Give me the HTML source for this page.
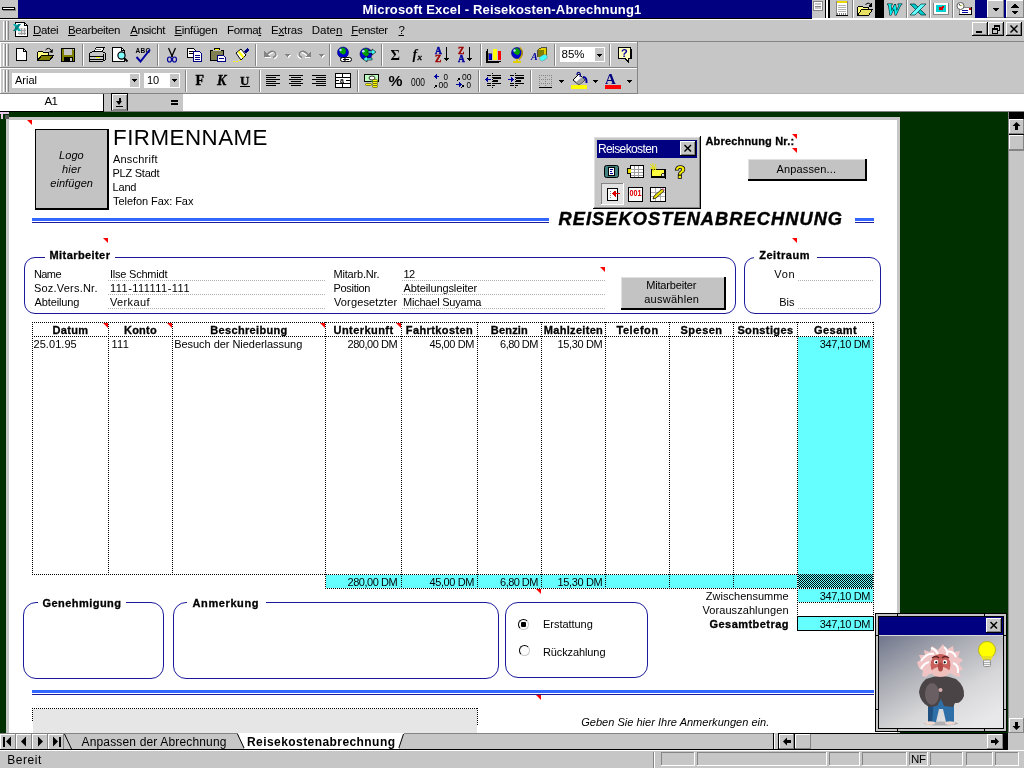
<!DOCTYPE html>
<html lang="de"><head><meta charset="utf-8"><title>Microsoft Excel - Reisekosten-Abrechnung1</title>
<style>
*{box-sizing:border-box;margin:0;padding:0}
html,body{width:1024px;height:768px;overflow:hidden;background:#003000;font-family:"Liberation Sans",sans-serif;font-size:10.5px;color:#000}
.a{position:absolute}
.t{position:absolute;white-space:nowrap;line-height:1}
.b{font-weight:bold}
.i{font-style:italic}
.g{background:#c6c6c6}
u{text-decoration:underline}
/* raised button */
.btn{position:absolute;background:#c6c6c6;border:1px solid;border-color:#fff #000 #000 #fff;box-shadow:inset -1px -1px 0 #848484}
.sunk{position:absolute;border:1px solid;border-color:#848484 #fff #fff #848484}
.sep{position:absolute;width:2px;border-left:1px solid #848484;border-right:1px solid #fff}
.rt{position:absolute;width:0;height:0;border-top:5px solid #f00;border-left:5px solid transparent}
.dot-h{position:absolute;height:1px;background-image:linear-gradient(90deg,#000 50%,transparent 50%);background-size:2px 1px}
.dot-v{position:absolute;width:1px;background-image:linear-gradient(180deg,#000 50%,transparent 50%);background-size:1px 2px}
.ldot{position:absolute;height:1px;background-image:linear-gradient(90deg,#b0b0b0 50%,transparent 50%);background-size:2px 1px}
.grp{position:absolute;border:1px solid #1a1a9a;border-radius:11px}
.lbl{position:absolute;background:#fff;font-weight:bold;white-space:nowrap;line-height:1;letter-spacing:.45px}
.cy{background:#66ffff}
</style></head><body>
<div id="root" style="position:absolute;left:0;top:0;width:1024px;height:768px;will-change:transform">
<!-- SECTION: titlebar -->
<div class="a" id="title" style="left:0;top:0;width:1024px;height:18px;background:#000080"></div>
<div class="a g" style="left:0;top:0;width:18px;height:18px"></div>
<div class="a" style="left:2px;top:7px;width:13px;height:3px;background:#fff;border:1px solid #000;box-shadow:1px 1px 0 #848484"></div>
<div class="a" style="left:0;top:18px;width:1024px;height:1px;background:#000"></div>
<!-- SECTION: menubar -->
<div class="a g" style="left:0;top:19px;width:1024px;height:75px"></div>
<!-- SECTION: toolbars -->
<div id="tb">
<svg class="a" style="left:0;top:0" width="1024" height="94" viewBox="0 0 1024 94" shape-rendering="crispEdges">
<rect x="0" y="19" width="1024" height="1" fill="#fff"/>
<rect x="0" y="41" width="1024" height="1" fill="#848484"/>
<rect x="0" y="42" width="638" height="1" fill="#fff"/>
<rect x="0" y="67" width="638" height="1" fill="#848484"/>
<rect x="637" y="42" width="1" height="26" fill="#848484"/>
<rect x="0" y="68" width="638" height="1" fill="#fff"/>
<rect x="0" y="93" width="638" height="1" fill="#848484"/>
<rect x="637" y="68" width="1" height="26" fill="#848484"/>
<rect x="638" y="93" width="386" height="1" fill="#b4b4b4"/>
<rect x="0" y="42" width="1" height="25" fill="#fff"/>
<rect x="0" y="68" width="1" height="25" fill="#fff"/>
<rect x="3" y="21" width="1" height="19" fill="#fff"/>
<rect x="4" y="21" width="1" height="19" fill="#c6c6c6"/>
<rect x="5" y="21" width="1" height="19" fill="#848484"/>
<rect x="6" y="21" width="1" height="19" fill="#fff"/>
<rect x="7" y="21" width="1" height="19" fill="#c6c6c6"/>
<rect x="8" y="21" width="1" height="19" fill="#848484"/>
<rect x="3" y="44" width="1" height="22" fill="#fff"/>
<rect x="4" y="44" width="1" height="22" fill="#c6c6c6"/>
<rect x="5" y="44" width="1" height="22" fill="#848484"/>
<rect x="6" y="44" width="1" height="22" fill="#fff"/>
<rect x="7" y="44" width="1" height="22" fill="#c6c6c6"/>
<rect x="8" y="44" width="1" height="22" fill="#848484"/>
<rect x="3" y="70" width="1" height="22" fill="#fff"/>
<rect x="4" y="70" width="1" height="22" fill="#c6c6c6"/>
<rect x="5" y="70" width="1" height="22" fill="#848484"/>
<rect x="6" y="70" width="1" height="22" fill="#fff"/>
<rect x="7" y="70" width="1" height="22" fill="#c6c6c6"/>
<rect x="8" y="70" width="1" height="22" fill="#848484"/>
<rect x="82" y="44" width="1" height="22" fill="#848484"/>
<rect x="83" y="44" width="1" height="22" fill="#fff"/>
<rect x="157" y="44" width="1" height="22" fill="#848484"/>
<rect x="158" y="44" width="1" height="22" fill="#fff"/>
<rect x="255" y="44" width="1" height="22" fill="#848484"/>
<rect x="256" y="44" width="1" height="22" fill="#fff"/>
<rect x="329" y="44" width="1" height="22" fill="#848484"/>
<rect x="330" y="44" width="1" height="22" fill="#fff"/>
<rect x="381" y="44" width="1" height="22" fill="#848484"/>
<rect x="382" y="44" width="1" height="22" fill="#fff"/>
<rect x="480" y="44" width="1" height="22" fill="#848484"/>
<rect x="481" y="44" width="1" height="22" fill="#fff"/>
<rect x="554" y="44" width="1" height="22" fill="#848484"/>
<rect x="555" y="44" width="1" height="22" fill="#fff"/>
<rect x="609" y="44" width="1" height="22" fill="#848484"/>
<rect x="610" y="44" width="1" height="22" fill="#fff"/>
<rect x="185" y="70" width="1" height="22" fill="#848484"/>
<rect x="186" y="70" width="1" height="22" fill="#fff"/>
<rect x="259" y="70" width="1" height="22" fill="#848484"/>
<rect x="260" y="70" width="1" height="22" fill="#fff"/>
<rect x="357" y="70" width="1" height="22" fill="#848484"/>
<rect x="358" y="70" width="1" height="22" fill="#fff"/>
<rect x="478" y="70" width="1" height="22" fill="#848484"/>
<rect x="479" y="70" width="1" height="22" fill="#fff"/>
<rect x="530" y="70" width="1" height="22" fill="#848484"/>
<rect x="531" y="70" width="1" height="22" fill="#fff"/>
<polygon points="15.5,22.5 24.5,22.5 27.5,25.5 27.5,36.5 15.5,36.5" fill="#fff" stroke="#000" stroke-width="1"/>
<polyline points="24.5,22.5 24.5,25.5 27.5,25.5" fill="none" stroke="#000" stroke-width="1"/>
<rect x="18" y="28" width="8" height="7" fill="#e0e0e0"/>
<rect x="21" y="28" width="1" height="7" fill="#a0a0a0"/>
<rect x="24" y="28" width="1" height="7" fill="#a0a0a0"/>
<rect x="18" y="30" width="8" height="1" fill="#a0a0a0"/>
<rect x="18" y="33" width="8" height="1" fill="#a0a0a0"/>
<polygon points="13,24 16,24 21,31 18,31" fill="#00b0b0" shape-rendering="auto"/>
<polygon points="18,24 21,24 16,31 13,31" fill="#008080" shape-rendering="auto"/>
<polygon points="16.5,48.5 23.5,48.5 26.5,51.5 26.5,60.5 16.5,60.5" fill="#fff" stroke="#000" stroke-width="1"/>
<polyline points="23.5,48.5 23.5,51.5 26.5,51.5" fill="none" stroke="#000" stroke-width="1"/>
<polygon points="37.5,60.5 37.5,52.5 38.5,51.5 42.5,51.5 43.5,52.5 48.5,52.5 48.5,56" fill="#ffff80" stroke="#000" stroke-width="1"/>
<polygon points="37.5,60.5 41.5,55.5 53.5,55.5 49.5,60.5" fill="#808000" stroke="#000" stroke-width="1"/>
<path d="M45.5,50 Q48.5,46.5 51.5,50.5" fill="none" stroke="#000" stroke-width="1" shape-rendering="auto"/>
<polygon points="53,49 52.5,53 49,52" fill="#000" shape-rendering="auto"/>
<rect x="61" y="48" width="14" height="14" fill="#000"/>
<rect x="62" y="49" width="12" height="12" fill="#808000"/>
<rect x="64" y="49" width="8" height="6" fill="#c6c6c6"/>
<rect x="64" y="57" width="9" height="5" fill="#000"/>
<rect x="70" y="58" width="2" height="3" fill="#c6c6c6"/>
<rect x="73" y="49" width="1" height="1" fill="#c6c6c6"/>
<polygon points="93.5,52.5 96.5,47.5 104.5,47.5 101.5,52.5" fill="#fff" stroke="#000" stroke-width="1"/>
<rect x="95" y="49" width="6" height="1" fill="#848484"/>
<rect x="94" y="51" width="6" height="1" fill="#848484"/>
<polygon points="89.5,53.5 92.5,51.5 102.5,51.5 105.5,53.5 105.5,59.5 102.5,61.5 89.5,61.5" fill="#c6c6c6" stroke="#000" stroke-width="1"/>
<rect x="90" y="56" width="13" height="1" fill="#000"/>
<rect x="90" y="59" width="13" height="1" fill="#000"/>
<rect x="96" y="57" width="4" height="1" fill="#ffff00"/>
<rect x="103" y="54" width="1" height="6" fill="#000"/>
<polygon points="112.5,47.5 121.5,47.5 124.5,50.5 124.5,61.5 112.5,61.5" fill="#fff" stroke="#000" stroke-width="1"/>
<polyline points="121.5,47.5 121.5,50.5 124.5,50.5" fill="none" stroke="#000" stroke-width="1"/>
<circle cx="121.5" cy="55.5" r="3.6" fill="#80ffff" stroke="#000" stroke-width="1.2" shape-rendering="auto"/>
<polyline points="124,58 127.5,61.5" fill="none" stroke="#000" stroke-width="2" shape-rendering="auto"/>
<text x="135.5" y="53" font-family='"Liberation Sans",sans-serif' font-size="6.5" font-weight="bold" font-style="normal" fill="#000" letter-spacing="0.3" shape-rendering="auto">ABC</text>
<polyline points="136.5,57 140.5,61.5 150,49.5" fill="none" stroke="#0000a0" stroke-width="2" shape-rendering="auto"/>
<polyline points="168.5,48 172.5,57" fill="none" stroke="#000" stroke-width="1.3" shape-rendering="auto"/>
<polyline points="175.5,48 171.5,57" fill="none" stroke="#000" stroke-width="1.3" shape-rendering="auto"/>
<ellipse cx="169.5" cy="59.5" rx="2" ry="2.5" fill="none" stroke="#0000a0" stroke-width="1.2" shape-rendering="auto"/>
<ellipse cx="174.5" cy="59.5" rx="2" ry="2.5" fill="none" stroke="#0000a0" stroke-width="1.2" shape-rendering="auto"/>
<polygon points="187.5,48.5 193.5,48.5 195.5,50.5 195.5,57.5 187.5,57.5" fill="#fff" stroke="#000" stroke-width="1"/>
<rect x="189" y="51" width="4" height="1" fill="#000"/>
<rect x="189" y="53" width="4" height="1" fill="#000"/>
<polygon points="193.5,51.5 199.5,51.5 201.5,53.5 201.5,61.5 193.5,61.5" fill="#fff" stroke="#000080" stroke-width="1"/>
<rect x="195" y="55" width="5" height="1" fill="#000080"/>
<rect x="195" y="57" width="5" height="1" fill="#000080"/>
<rect x="195" y="59" width="5" height="1" fill="#000080"/>
<rect x="210" y="50" width="14" height="11" fill="#000"/>
<rect x="211" y="51" width="12" height="9" fill="#808050"/>
<rect x="214" y="48" width="6" height="3" fill="#000"/>
<rect x="215" y="49" width="4" height="1" fill="#ffff00"/>
<rect x="213" y="50" width="8" height="1" fill="#c6c6c6"/>
<polygon points="217.5,55.5 223.5,55.5 225.5,57.5 225.5,61.5 217.5,61.5" fill="#fff" stroke="#000080" stroke-width="1"/>
<rect x="219" y="58" width="5" height="1" fill="#000080"/>
<polygon points="244,52 247,48 249,50 246,54" fill="#000080"/>
<polygon points="236,53 241,49 246,55 241,60" fill="#fff" stroke="#000" stroke-width="1" shape-rendering="auto"/>
<polyline points="238.5,51.5 243.5,57.5" fill="none" stroke="#ffff00" stroke-width="2" shape-rendering="auto"/>
<rect x="233" y="61" width="2" height="1" fill="#ffff00"/>
<rect x="236" y="61" width="2" height="1" fill="#ffff00"/>
<rect x="239" y="60" width="2" height="1" fill="#ffff00"/>
<g><path d="M268,55.5 Q273,50 276.5,54 Q278,57 274,58.5" fill="none" stroke="#fff" stroke-width="1.6" shape-rendering="auto"/><polygon points="265,52 265,58 271,58" fill="#fff"/></g>
<g><path d="M267,54.5 Q272,49 275.5,53 Q277,56 273,57.5" fill="none" stroke="#848484" stroke-width="1.6" shape-rendering="auto"/><polygon points="264,51 264,57 270,57" fill="#848484"/></g>
<g transform="translate(609,0) scale(-1,1)"><path d="M302,55.5 Q307,50 310.5,54 Q312,57 308,58.5" fill="none" stroke="#fff" stroke-width="1.6" shape-rendering="auto"/><polygon points="299,52 299,58 305,58" fill="#fff"/></g>
<g transform="translate(609,0) scale(-1,1)"><path d="M301,54.5 Q306,49 309.5,53 Q311,56 307,57.5" fill="none" stroke="#848484" stroke-width="1.6" shape-rendering="auto"/><polygon points="298,51 298,57 304,57" fill="#848484"/></g>
<rect x="286" y="55" width="5" height="1" fill="#fff"/>
<rect x="287" y="56" width="3" height="1" fill="#fff"/>
<rect x="288" y="57" width="1" height="1" fill="#fff"/>
<rect x="285" y="54" width="5" height="1" fill="#848484"/>
<rect x="286" y="55" width="3" height="1" fill="#848484"/>
<rect x="287" y="56" width="1" height="1" fill="#848484"/>
<rect x="320" y="55" width="5" height="1" fill="#fff"/>
<rect x="321" y="56" width="3" height="1" fill="#fff"/>
<rect x="322" y="57" width="1" height="1" fill="#fff"/>
<rect x="319" y="54" width="5" height="1" fill="#848484"/>
<rect x="320" y="55" width="3" height="1" fill="#848484"/>
<rect x="321" y="56" width="1" height="1" fill="#848484"/>
<circle cx="343" cy="52.5" r="5.5" fill="#0000d0" stroke="#000060" stroke-width="0.6" shape-rendering="auto"/>
<path d="M341.9,47.55 q4.95,0.55 3.8499999999999996,4.95 q-1.1,3.3 -4.4,1.1 q-2.75,-1.65 -1.65,-3.8499999999999996 z" fill="#00a000" shape-rendering="auto"/>
<circle cx="340.525" cy="50.025" r="1.21" fill="#c0e0ff" shape-rendering="auto"/>
<rect x="340.5" y="57.5" width="7" height="4" rx="2" fill="#fff" stroke="#000" shape-rendering="auto"/>
<rect x="344.5" y="57.5" width="7" height="4" rx="2" fill="#fff" stroke="#000" shape-rendering="auto"/>
<rect x="343" y="59" width="6" height="1" fill="#000"/>
<circle cx="366" cy="54" r="6" fill="#0000d0" stroke="#000060" stroke-width="0.6" shape-rendering="auto"/>
<path d="M364.8,48.6 q5.4,0.6000000000000001 4.199999999999999,5.4 q-1.2000000000000002,3.5999999999999996 -4.800000000000001,1.2000000000000002 q-3.0,-1.7999999999999998 -1.7999999999999998,-4.199999999999999 z" fill="#00a000" shape-rendering="auto"/>
<circle cx="363.3" cy="51.3" r="1.32" fill="#c0e0ff" shape-rendering="auto"/>
<polygon points="368,51 372,51 372,49 376,52 372,55 372,53 368,53" fill="#40ffff" stroke="#000" stroke-width="0.6" shape-rendering="auto"/>
<polygon points="372,58 367,58 367,56 363,59 367,62 367,60 372,60" fill="#40ffff" stroke="#000" stroke-width="0.6" shape-rendering="auto"/>
<text x="390.5" y="59.5" font-family='"Liberation Serif",serif' font-size="14" font-weight="bold" font-style="normal" fill="#000" textLength="9.5" lengthAdjust="spacingAndGlyphs">Σ</text>
<text x="412.5" y="58.5" font-family='"Liberation Serif",serif' font-size="14" font-weight="bold" font-style="italic" fill="#000">f</text>
<text x="417.5" y="59.5" font-family='"Liberation Serif",serif' font-size="9" font-weight="bold" font-style="italic" fill="#000" stroke="#000" stroke-width="0.3">x</text>
<text x="435" y="53.5" font-family='"Liberation Serif",serif' font-size="9.5" font-weight="bold" font-style="normal" fill="#0000a0" stroke="#0000a0" stroke-width="0.4">A</text>
<text x="435" y="62" font-family='"Liberation Serif",serif' font-size="9.5" font-weight="bold" font-style="normal" fill="#a00000" stroke="#a00000" stroke-width="0.4">Z</text>
<rect x="446" y="47" width="1" height="13" fill="#000"/>
<rect x="444" y="58" width="5" height="1" fill="#000"/>
<rect x="445" y="59" width="3" height="1" fill="#000"/>
<rect x="446" y="60" width="1" height="1" fill="#000"/>
<text x="458" y="53.5" font-family='"Liberation Serif",serif' font-size="9.5" font-weight="bold" font-style="normal" fill="#a00000" stroke="#a00000" stroke-width="0.4">Z</text>
<text x="458" y="62" font-family='"Liberation Serif",serif' font-size="9.5" font-weight="bold" font-style="normal" fill="#0000a0" stroke="#0000a0" stroke-width="0.4">A</text>
<rect x="469" y="47" width="1" height="13" fill="#000"/>
<rect x="467" y="58" width="5" height="1" fill="#000"/>
<rect x="468" y="59" width="3" height="1" fill="#000"/>
<rect x="469" y="60" width="1" height="1" fill="#000"/>
<polyline points="487.5,49 487.5,61.5 501,61.5" fill="none" stroke="#000" stroke-width="1"/>
<polyline points="486.5,51 486.5,62.5 499,62.5" fill="none" stroke="#000" stroke-width="1"/>
<rect x="489" y="54" width="3" height="6" fill="#0000ff"/>
<rect x="493" y="49" width="4" height="11" fill="#ffff00"/>
<rect x="498" y="51" width="3" height="9" fill="#ff0000"/>
<rect x="488.5" y="53.5" width="3" height="6" fill="none" stroke="#000" stroke-width="0.5"/>
<circle cx="517" cy="53" r="5.5" fill="#0000d0" stroke="#000060" stroke-width="0.6" shape-rendering="auto"/>
<path d="M515.9,48.05 q4.95,0.55 3.8499999999999996,4.95 q-1.1,3.3 -4.4,1.1 q-2.75,-1.65 -1.65,-3.8499999999999996 z" fill="#00a000" shape-rendering="auto"/>
<circle cx="514.525" cy="50.525" r="1.21" fill="#c0e0ff" shape-rendering="auto"/>
<path d="M520,47.5 Q525,53 519,59.5" fill="none" stroke="#c0a000" stroke-width="1.5" shape-rendering="auto"/>
<rect x="516" y="59" width="2" height="2" fill="#e0d000"/>
<rect x="513" y="61" width="8" height="2" fill="#e0d000"/>
<polygon points="537.5,49.5 540.5,47.5 546.5,47.5 546.5,54.5 543.5,56.5 537.5,56.5" fill="#e0d000" stroke="#000" stroke-width="0.6"/>
<polygon points="537.5,49.5 543.5,49.5 543.5,56.5 537.5,56.5" fill="#808000"/>
<text x="531" y="60" font-family='"Liberation Serif",serif' font-size="10" font-weight="bold" font-style="italic" fill="#0000a0">A</text>
<rect x="539.5" y="55.5" width="8" height="5" rx="2.5" transform="rotate(-30 543 58)" fill="#40ffff" stroke="#808080" stroke-width="0.5" shape-rendering="auto"/>
<rect x="560" y="47" width="45" height="15" fill="#fff"/>
<rect x="595" y="48" width="9" height="13" fill="#c6c6c6"/>
<rect x="597" y="54" width="5" height="1" fill="#000"/>
<rect x="598" y="55" width="3" height="1" fill="#000"/>
<rect x="599" y="56" width="1" height="1" fill="#000"/>
<text x="561.5" y="58" font-family='"Liberation Sans",sans-serif' font-size="11.5" font-weight="normal" font-style="normal" fill="#000">85%</text>
<polygon points="618.5,47.5 630.5,47.5 630.5,58.5 628.5,58.5 628.5,62 625,58.5 618.5,58.5" fill="#ffffc0" stroke="#000" stroke-width="1"/>
<rect x="631" y="49" width="1" height="10" fill="#000"/>
<text x="621" y="57" font-family='"Liberation Sans",sans-serif' font-size="11" font-weight="bold" font-style="normal" fill="#0000a0">?</text>
<rect x="12" y="73" width="128" height="15" fill="#fff"/>
<rect x="130" y="74" width="9" height="13" fill="#c6c6c6"/>
<rect x="132" y="79" width="5" height="1" fill="#000"/>
<rect x="133" y="80" width="3" height="1" fill="#000"/>
<rect x="134" y="81" width="1" height="1" fill="#000"/>
<rect x="144" y="73" width="36" height="15" fill="#fff"/>
<rect x="170" y="74" width="9" height="13" fill="#c6c6c6"/>
<rect x="172" y="79" width="5" height="1" fill="#000"/>
<rect x="173" y="80" width="3" height="1" fill="#000"/>
<rect x="174" y="81" width="1" height="1" fill="#000"/>
<text x="15" y="84" font-family='"Liberation Sans",sans-serif' font-size="11" font-weight="normal" font-style="normal" fill="#000">Arial</text>
<text x="147" y="84" font-family='"Liberation Sans",sans-serif' font-size="11" font-weight="normal" font-style="normal" fill="#000">10</text>
<text x="195.5" y="85" font-family='"Liberation Serif",serif' font-size="14" font-weight="bold" font-style="normal" fill="#000" stroke="#000" stroke-width="0.4">F</text>
<text x="217" y="85" font-family='"Liberation Serif",serif' font-size="14" font-weight="bold" font-style="italic" fill="#000" stroke="#000" stroke-width="0.3">K</text>
<text x="240" y="84.5" font-family='"Liberation Serif",serif' font-size="13" font-weight="bold" font-style="normal" fill="#000" stroke="#000" stroke-width="0.3">U</text>
<rect x="240" y="86" width="10" height="1" fill="#000"/>
<rect x="266" y="75" width="14" height="1" fill="#000"/>
<rect x="266" y="77" width="10" height="1" fill="#000"/>
<rect x="266" y="79" width="14" height="1" fill="#000"/>
<rect x="266" y="81" width="10" height="1" fill="#000"/>
<rect x="266" y="83" width="14" height="1" fill="#000"/>
<rect x="266" y="85" width="10" height="1" fill="#000"/>
<rect x="289" y="75" width="14" height="1" fill="#000"/>
<rect x="291" y="77" width="10" height="1" fill="#000"/>
<rect x="289" y="79" width="14" height="1" fill="#000"/>
<rect x="291" y="81" width="10" height="1" fill="#000"/>
<rect x="289" y="83" width="14" height="1" fill="#000"/>
<rect x="291" y="85" width="10" height="1" fill="#000"/>
<rect x="312" y="75" width="14" height="1" fill="#000"/>
<rect x="316" y="77" width="10" height="1" fill="#000"/>
<rect x="312" y="79" width="14" height="1" fill="#000"/>
<rect x="316" y="81" width="10" height="1" fill="#000"/>
<rect x="312" y="83" width="14" height="1" fill="#000"/>
<rect x="316" y="85" width="10" height="1" fill="#000"/>
<rect x="335" y="73" width="16" height="15" fill="#000"/>
<rect x="336" y="74" width="14" height="3" fill="#fff"/>
<rect x="336" y="84" width="14" height="3" fill="#fff"/>
<rect x="336" y="78" width="14" height="5" fill="#fff"/>
<rect x="342" y="74" width="1" height="3" fill="#000"/>
<rect x="342" y="84" width="1" height="3" fill="#000"/>
<text x="340" y="83" font-family='"Liberation Sans",sans-serif' font-size="7" font-weight="bold" font-style="normal" fill="#000">a</text>
<polyline points="336,80.5 339,80.5" fill="none" stroke="#000" stroke-width="1"/>
<polyline points="346,80.5 350,80.5" fill="none" stroke="#000" stroke-width="1"/>
<rect x="364" y="74" width="15" height="8" fill="#008000"/>
<rect x="365" y="75" width="13" height="6" fill="#c0ffc0"/>
<rect x="364" y="74" width="15" height="1" fill="#000"/>
<rect x="364" y="74" width="1" height="8" fill="#000"/>
<rect x="378" y="74" width="1" height="8" fill="#000"/>
<rect x="364" y="81" width="7" height="1" fill="#000"/>
<ellipse cx="372" cy="78" rx="3" ry="2" fill="#fff" stroke="#000" stroke-width="0.8" shape-rendering="auto"/>
<rect x="372.5" y="79.5" width="5" height="2" rx="1" fill="#ffff00" stroke="#404000" stroke-width="0.6" shape-rendering="auto"/>
<rect x="372.5" y="81.5" width="5" height="2" rx="1" fill="#ffff00" stroke="#404000" stroke-width="0.6" shape-rendering="auto"/>
<rect x="372.5" y="83.5" width="5" height="2" rx="1" fill="#ffff00" stroke="#404000" stroke-width="0.6" shape-rendering="auto"/>
<rect x="372.5" y="85.5" width="5" height="2" rx="1" fill="#ffff00" stroke="#404000" stroke-width="0.6" shape-rendering="auto"/>
<rect x="365.5" y="83.5" width="6" height="2" rx="1" fill="#ffff00" stroke="#404000" stroke-width="0.6" shape-rendering="auto"/>
<text x="388.5" y="86" font-family='"Liberation Sans",sans-serif' font-size="14" font-weight="bold" font-style="normal" fill="#000" textLength="14" lengthAdjust="spacingAndGlyphs">%</text>
<text x="411" y="86" font-family='"Liberation Sans",sans-serif' font-size="11.5" font-weight="normal" font-style="normal" fill="#000" textLength="14" lengthAdjust="spacingAndGlyphs">000</text>
<polyline points="435,76.5 439,76.5" fill="none" stroke="#0000a0" stroke-width="1.5"/>
<polygon points="434,76.5 436.5,74 436.5,79" fill="#0000a0"/>
<text x="443.5" y="80" font-family='"Liberation Sans",sans-serif' font-size="9" font-weight="normal" font-style="normal" fill="#000" textLength="4.5" lengthAdjust="spacingAndGlyphs">0</text>
<text x="438.5" y="87.5" font-family='"Liberation Sans",sans-serif' font-size="9" font-weight="normal" font-style="normal" fill="#000" textLength="9.5" lengthAdjust="spacingAndGlyphs">00</text>
<rect x="435" y="85" width="2" height="2" fill="#000"/>
<rect x="434" y="87" width="1" height="1" fill="#000"/>
<text x="462" y="80" font-family='"Liberation Sans",sans-serif' font-size="9" font-weight="normal" font-style="normal" fill="#000" textLength="9.5" lengthAdjust="spacingAndGlyphs">00</text>
<rect x="458" y="78" width="2" height="2" fill="#000"/>
<rect x="457" y="80" width="1" height="1" fill="#000"/>
<polyline points="456,84.5 460,84.5" fill="none" stroke="#0000a0" stroke-width="1.5"/>
<polygon points="461.5,84.5 459,82 459,87" fill="#0000a0"/>
<text x="466.5" y="87.5" font-family='"Liberation Sans",sans-serif' font-size="9" font-weight="normal" font-style="normal" fill="#000" textLength="4.5" lengthAdjust="spacingAndGlyphs">0</text>
<rect x="462" y="85" width="2" height="2" fill="#000"/>
<rect x="461" y="87" width="1" height="1" fill="#000"/>
<rect x="492" y="73" width="1" height="1" fill="#000"/>
<rect x="492" y="75" width="1" height="1" fill="#000"/>
<rect x="492" y="77" width="1" height="1" fill="#000"/>
<rect x="492" y="79" width="1" height="1" fill="#000"/>
<rect x="492" y="81" width="1" height="1" fill="#000"/>
<rect x="492" y="83" width="1" height="1" fill="#000"/>
<rect x="492" y="85" width="1" height="1" fill="#000"/>
<rect x="492" y="87" width="1" height="1" fill="#000"/>
<rect x="487" y="75" width="4" height="1" fill="#000"/>
<rect x="493" y="75" width="8" height="1" fill="#000"/>
<rect x="493" y="77" width="8" height="2" fill="#000"/>
<rect x="493" y="80" width="5" height="2" fill="#000"/>
<rect x="487" y="83" width="4" height="1" fill="#000"/>
<rect x="493" y="83" width="8" height="1" fill="#000"/>
<rect x="487" y="85" width="4" height="1" fill="#000"/>
<rect x="493" y="85" width="2" height="1" fill="#000"/>
<rect x="487" y="79" width="4" height="1" fill="#0000a0"/>
<polygon points="485,79.5 488,76.5 488,82.5" fill="#0000a0"/>
<rect x="515" y="73" width="1" height="1" fill="#000"/>
<rect x="515" y="75" width="1" height="1" fill="#000"/>
<rect x="515" y="77" width="1" height="1" fill="#000"/>
<rect x="515" y="79" width="1" height="1" fill="#000"/>
<rect x="515" y="81" width="1" height="1" fill="#000"/>
<rect x="515" y="83" width="1" height="1" fill="#000"/>
<rect x="515" y="85" width="1" height="1" fill="#000"/>
<rect x="515" y="87" width="1" height="1" fill="#000"/>
<rect x="510" y="75" width="4" height="1" fill="#000"/>
<rect x="516" y="75" width="8" height="1" fill="#000"/>
<rect x="516" y="77" width="8" height="2" fill="#000"/>
<rect x="516" y="80" width="5" height="2" fill="#000"/>
<rect x="510" y="83" width="4" height="1" fill="#000"/>
<rect x="516" y="83" width="8" height="1" fill="#000"/>
<rect x="510" y="85" width="4" height="1" fill="#000"/>
<rect x="516" y="85" width="2" height="1" fill="#000"/>
<rect x="508" y="79" width="3" height="1" fill="#0000a0"/>
<polygon points="514,79.5 511,76.5 511,82.5" fill="#0000a0"/>
<rect x="539" y="75" width="1" height="1" fill="#848484"/>
<rect x="541" y="75" width="1" height="1" fill="#848484"/>
<rect x="543" y="75" width="1" height="1" fill="#848484"/>
<rect x="545" y="75" width="1" height="1" fill="#848484"/>
<rect x="547" y="75" width="1" height="1" fill="#848484"/>
<rect x="549" y="75" width="1" height="1" fill="#848484"/>
<rect x="551" y="75" width="1" height="1" fill="#848484"/>
<rect x="539" y="79" width="1" height="1" fill="#848484"/>
<rect x="541" y="79" width="1" height="1" fill="#848484"/>
<rect x="543" y="79" width="1" height="1" fill="#848484"/>
<rect x="545" y="79" width="1" height="1" fill="#848484"/>
<rect x="547" y="79" width="1" height="1" fill="#848484"/>
<rect x="549" y="79" width="1" height="1" fill="#848484"/>
<rect x="551" y="79" width="1" height="1" fill="#848484"/>
<rect x="539" y="83" width="1" height="1" fill="#848484"/>
<rect x="541" y="83" width="1" height="1" fill="#848484"/>
<rect x="543" y="83" width="1" height="1" fill="#848484"/>
<rect x="545" y="83" width="1" height="1" fill="#848484"/>
<rect x="547" y="83" width="1" height="1" fill="#848484"/>
<rect x="549" y="83" width="1" height="1" fill="#848484"/>
<rect x="551" y="83" width="1" height="1" fill="#848484"/>
<rect x="539" y="75" width="1" height="1" fill="#848484"/>
<rect x="539" y="77" width="1" height="1" fill="#848484"/>
<rect x="539" y="79" width="1" height="1" fill="#848484"/>
<rect x="539" y="81" width="1" height="1" fill="#848484"/>
<rect x="539" y="83" width="1" height="1" fill="#848484"/>
<rect x="539" y="85" width="1" height="1" fill="#848484"/>
<rect x="545" y="75" width="1" height="1" fill="#848484"/>
<rect x="545" y="77" width="1" height="1" fill="#848484"/>
<rect x="545" y="79" width="1" height="1" fill="#848484"/>
<rect x="545" y="81" width="1" height="1" fill="#848484"/>
<rect x="545" y="83" width="1" height="1" fill="#848484"/>
<rect x="545" y="85" width="1" height="1" fill="#848484"/>
<rect x="551" y="75" width="1" height="1" fill="#848484"/>
<rect x="551" y="77" width="1" height="1" fill="#848484"/>
<rect x="551" y="79" width="1" height="1" fill="#848484"/>
<rect x="551" y="81" width="1" height="1" fill="#848484"/>
<rect x="551" y="83" width="1" height="1" fill="#848484"/>
<rect x="551" y="85" width="1" height="1" fill="#848484"/>
<rect x="539" y="87" width="13" height="1" fill="#000"/>
<rect x="559" y="80" width="5" height="1" fill="#000"/>
<rect x="560" y="81" width="3" height="1" fill="#000"/>
<rect x="561" y="82" width="1" height="1" fill="#000"/>
<polygon points="573,80 579,74 585,80 579,85" fill="#fff" stroke="#000" stroke-width="1" shape-rendering="auto"/>
<polygon points="576,82 582,77 585,80 579,85" fill="#a0a0a0" shape-rendering="auto"/>
<path d="M577,75 Q577,72 579,72.5 Q581,73 580,77" fill="none" stroke="#000080" stroke-width="1.2" shape-rendering="auto"/>
<path d="M583,77 Q587,77 586.5,83" fill="none" stroke="#0000a0" stroke-width="2" shape-rendering="auto"/>
<rect x="571" y="85" width="16" height="4" fill="#ffff00"/>
<rect x="593" y="80" width="5" height="1" fill="#000"/>
<rect x="594" y="81" width="3" height="1" fill="#000"/>
<rect x="595" y="82" width="1" height="1" fill="#000"/>
<text x="605" y="84" font-family='"Liberation Serif",serif' font-size="15" font-weight="bold" font-style="normal" fill="#000080">A</text>
<rect x="605" y="85" width="16" height="4" fill="#ff0000"/>
<rect x="627" y="80" width="5" height="1" fill="#000"/>
<rect x="628" y="81" width="3" height="1" fill="#000"/>
<rect x="629" y="82" width="1" height="1" fill="#000"/>
</svg>
<div class="t b" style="left:362.5px;top:2.5px;font-size:13px;letter-spacing:0.16px;color:#fff">Microsoft Excel - Reisekosten-Abrechnung1</div>
<div class="t" style="left:33.0px;top:25.3px;font-size:11.5px;letter-spacing:-0.34px"><u>D</u>atei</div>
<div class="t" style="left:68.0px;top:25.3px;font-size:11.5px;letter-spacing:-0.35px"><u>B</u>earbeiten</div>
<div class="t" style="left:130.2px;top:25.3px;font-size:11.5px;letter-spacing:-0.41px"><u>A</u>nsicht</div>
<div class="t" style="left:174.5px;top:25.3px;font-size:11.5px;letter-spacing:-0.34px"><u>E</u>infügen</div>
<div class="t" style="left:227.0px;top:25.3px;font-size:11.5px;letter-spacing:-0.39px">Forma<u>t</u></div>
<div class="t" style="left:271.0px;top:25.3px;font-size:11.5px;letter-spacing:-0.17px">E<u>x</u>tras</div>
<div class="t" style="left:311.8px;top:25.3px;font-size:11.5px;letter-spacing:-0.05px">Date<u>n</u></div>
<div class="t" style="left:351.2px;top:25.3px;font-size:11.5px;letter-spacing:-0.33px"><u>F</u>enster</div>
<div class="t" style="left:398.5px;top:25.3px;font-size:11.5px;letter-spacing:-0.91px"><u>?</u></div>
</div>
<!-- SECTION: formulabar -->
<div class="a" style="left:0;top:94px;width:1024px;height:17px;background:#fff"></div>
<div class="a g" style="left:103px;top:94px;width:80px;height:17px"></div>
<!-- SECTION: sheet -->
<div id="sheet">
<div class="a" style="left:0;top:111px;width:1024px;height:1px;background:#808080"></div>
<div class="a" style="left:0;top:111px;width:104px;height:1px;background:#000"></div>
<div class="a" style="left:103px;top:94px;width:1px;height:17px;background:#000"></div>
<div class="a" style="left:111px;top:93px;width:17px;height:18px;background:#c6c6c6;border:1px solid;border-color:#000 #000 #848484 #000;box-shadow:inset 1px 1px 0 #fff,inset -1px -1px 0 #848484"></div>
<div class="a" style="left:118.5px;top:98px;width:2px;height:3px;background:#000"></div>
<div class="a" style="left:116px;top:101px;width:0;height:0;border-top:4px solid #000;border-left:3.5px solid transparent;border-right:3.5px solid transparent"></div>
<div class="a" style="left:116px;top:106px;width:7px;height:1px;background:#000"></div>
<div class="a" style="left:171px;top:100px;width:7px;height:2px;background:#000"></div>
<div class="a" style="left:171px;top:103px;width:7px;height:2px;background:#000"></div>
<div class="a" style="left:6px;top:117px;width:894px;height:620px;background:#c6c6c6"></div>
<div class="a" style="left:9px;top:120px;width:888px;height:617px;background:#fff"></div>
<div class="a" style="left:0;top:112px;width:9px;height:2px;background:#e8c8e8"></div>
<div class="a" style="left:1px;top:112px;width:2px;height:7px;background:#e8c8e8"></div>
<div class="a" style="left:5px;top:115px;width:4px;height:4px;background:#555"></div>
<div class="a" style="left:35px;top:129px;width:74px;height:81px;background:#000"></div>
<div class="a" style="left:36px;top:130px;width:71px;height:78px;background:#c3c3c3"></div>
<div class="t" style="left:44.5px;top:96.3px;font-size:11.5px;letter-spacing:-0.58px">A1</div>
<div class="t i" style="left:59.0px;top:149.7px;font-size:11px;letter-spacing:0.09px">Logo</div>
<div class="t i" style="left:62.0px;top:163.7px;font-size:11px;letter-spacing:0.22px">hier</div>
<div class="t i" style="left:50.2px;top:177.7px;font-size:11px;letter-spacing:0.08px">einfügen</div>
<div class="t" style="left:113.0px;top:127.1px;font-size:22.3px;letter-spacing:0.51px">FIRMENNAME</div>
<div class="t" style="left:113.0px;top:153.7px;font-size:11px;letter-spacing:0.21px">Anschrift</div>
<div class="t" style="left:112.5px;top:167.7px;font-size:11px;letter-spacing:-0.24px">PLZ Stadt</div>
<div class="t" style="left:112.5px;top:181.7px;font-size:11px;letter-spacing:-0.16px">Land</div>
<div class="t" style="left:113.0px;top:195.7px;font-size:11px;letter-spacing:-0.06px">Telefon Fax: Fax</div>
<div class="rt" style="left:27px;top:120px"></div>
<div class="rt" style="left:103px;top:238px"></div>
<div class="rt" style="left:600px;top:267px"></div>
<div class="rt" style="left:792px;top:134px"></div>
<div class="rt" style="left:792px;top:148px"></div>
<div class="rt" style="left:792px;top:238px"></div>
<div class="rt" style="left:536px;top:589px"></div>
<div class="rt" style="left:536px;top:695px"></div>
<div class="a" style="left:32px;top:218px;width:517px;height:3px;background:#3366ff"></div>
<div class="a" style="left:32px;top:222px;width:517px;height:1px;background:#1a1a9a"></div>
<div class="a" style="left:855px;top:218px;width:19px;height:3px;background:#3366ff"></div>
<div class="a" style="left:855px;top:222px;width:19px;height:1px;background:#1a1a9a"></div>
<div class="t b i" style="left:558.5px;top:209.6px;font-size:18.2px;letter-spacing:1.09px;-webkit-text-stroke:0.45px #000">REISEKOSTENABRECHNUNG</div>
<div class="t b" style="left:705.5px;top:135.7px;font-size:11px;letter-spacing:0.17px;-webkit-text-stroke:.3px #000">Abrechnung Nr.:</div>
<div class="a" style="left:748px;top:159px;width:119px;height:22px;background:#000"></div>
<div class="a" style="left:748px;top:159px;width:117px;height:20px;background:#c3c3c3;border-top:1px solid #e0e0e0;border-left:1px solid #e0e0e0"></div>
<div class="t" style="left:776.5px;top:164.2px;font-size:11px;letter-spacing:0.14px">Anpassen...</div>
<div class="grp" style="left:24px;top:257px;width:712px;height:57px"></div>
<div class="a" style="left:45px;top:255px;width:70px;height:5px;background:#fff"></div>
<div class="t b" style="left:49.5px;top:249.7px;font-size:11px;letter-spacing:0.42px;-webkit-text-stroke:.3px #000">Mitarbeiter</div>
<div class="t" style="left:34.0px;top:268.7px;font-size:11px;letter-spacing:-0.61px">Name</div>
<div class="t" style="left:34.0px;top:282.7px;font-size:11px;letter-spacing:0.21px">Soz.Vers.Nr.</div>
<div class="t" style="left:34.5px;top:296.7px;font-size:11px;letter-spacing:-0.11px">Abteilung</div>
<div class="t" style="left:110.0px;top:268.7px;font-size:11px;letter-spacing:-0.22px">Ilse Schmidt</div>
<div class="t" style="left:110.0px;top:282.7px;font-size:11px;letter-spacing:0.47px">111-111111-111</div>
<div class="t" style="left:110.0px;top:296.7px;font-size:11px;letter-spacing:0.36px">Verkauf</div>
<div class="ldot" style="left:108px;top:280px;width:217px"></div>
<div class="ldot" style="left:402px;top:280px;width:203px"></div>
<div class="ldot" style="left:108px;top:294px;width:217px"></div>
<div class="ldot" style="left:402px;top:294px;width:203px"></div>
<div class="ldot" style="left:108px;top:308px;width:217px"></div>
<div class="ldot" style="left:402px;top:308px;width:203px"></div>
<div class="t" style="left:333.5px;top:268.7px;font-size:11px;letter-spacing:-0.19px">Mitarb.Nr.</div>
<div class="t" style="left:333.5px;top:282.7px;font-size:11px;letter-spacing:-0.31px">Position</div>
<div class="t" style="left:334.0px;top:296.7px;font-size:11px;letter-spacing:0.13px">Vorgesetzter</div>
<div class="t" style="left:403.5px;top:268.7px;font-size:11px;letter-spacing:-0.5px">12</div>
<div class="t" style="left:403.5px;top:282.7px;font-size:11px;letter-spacing:-0.1px">Abteilungsleiter</div>
<div class="t" style="left:403.0px;top:296.7px;font-size:11px;letter-spacing:-0.22px">Michael Suyama</div>
<div class="a" style="left:621px;top:277px;width:105px;height:33px;background:#000"></div>
<div class="a" style="left:621px;top:277px;width:103px;height:31px;background:#c3c3c3;border-top:1px solid #e0e0e0;border-left:1px solid #e0e0e0"></div>
<div class="t" style="left:646.2px;top:279.7px;font-size:11px;letter-spacing:-0.17px">Mitarbeiter</div>
<div class="t" style="left:644.2px;top:293.7px;font-size:11px;letter-spacing:0.27px">auswählen</div>
<div class="grp" style="left:744px;top:257px;width:137px;height:57px"></div>
<div class="a" style="left:754px;top:255px;width:63px;height:5px;background:#fff"></div>
<div class="t b" style="left:759.2px;top:249.7px;font-size:11px;letter-spacing:0.54px;-webkit-text-stroke:.3px #000">Zeitraum</div>
<div class="t" style="left:774.2px;top:268.7px;font-size:11px;letter-spacing:0.77px">Von</div>
<div class="t" style="left:779.2px;top:296.7px;font-size:11px;letter-spacing:-0.02px">Bis</div>
<div class="ldot" style="left:798px;top:280px;width:76px"></div>
<div class="ldot" style="left:798px;top:308px;width:76px"></div>
<div class="a cy" style="left:798px;top:337px;width:75px;height:238px"></div>
<div class="a cy" style="left:326px;top:575px;width:471px;height:13px"></div>
<div class="a" style="left:798px;top:575px;width:75px;height:13px;background:#2f8f8f;background-image:repeating-conic-gradient(#000 0 25%,#66ffff 0 50%);background-size:2px 2px"></div>
<div class="a cy" style="left:798px;top:589px;width:75px;height:13px"></div>
<div class="a cy" style="left:797px;top:616px;width:77px;height:15px;border:1px solid #000"></div>
<div class="dot-h" style="left:32px;top:322px;width:842px"></div>
<div class="dot-h" style="left:32px;top:336px;width:842px"></div>
<div class="dot-h" style="left:32px;top:574px;width:842px"></div>
<div class="dot-h" style="left:325px;top:588px;width:549px"></div>
<div class="dot-h" style="left:797px;top:602px;width:77px"></div>
<div class="dot-v" style="left:32px;top:322px;height:253px"></div>
<div class="dot-v" style="left:108px;top:322px;height:253px"></div>
<div class="dot-v" style="left:172px;top:322px;height:253px"></div>
<div class="dot-v" style="left:325px;top:322px;height:267px"></div>
<div class="dot-v" style="left:401px;top:322px;height:267px"></div>
<div class="dot-v" style="left:477px;top:322px;height:267px"></div>
<div class="dot-v" style="left:541px;top:322px;height:267px"></div>
<div class="dot-v" style="left:605px;top:322px;height:267px"></div>
<div class="dot-v" style="left:669px;top:322px;height:267px"></div>
<div class="dot-v" style="left:733px;top:322px;height:267px"></div>
<div class="dot-v" style="left:797px;top:322px;height:295px"></div>
<div class="dot-v" style="left:873px;top:322px;height:295px"></div>
<div class="t b" style="left:52.4px;top:324.7px;font-size:11px;letter-spacing:0.37px;-webkit-text-stroke:.3px #000">Datum</div>
<div class="t b" style="left:124.0px;top:324.7px;font-size:11px;letter-spacing:0.21px;-webkit-text-stroke:.3px #000">Konto</div>
<div class="t b" style="left:210.3px;top:324.7px;font-size:11px;letter-spacing:0.33px;-webkit-text-stroke:.3px #000">Beschreibung</div>
<div class="t b" style="left:333.6px;top:324.7px;font-size:11px;letter-spacing:0.43px;-webkit-text-stroke:.3px #000">Unterkunft</div>
<div class="t b" style="left:405.8px;top:324.7px;font-size:11px;letter-spacing:0.4px;-webkit-text-stroke:.3px #000">Fahrtkosten</div>
<div class="t b" style="left:490.8px;top:324.7px;font-size:11px;letter-spacing:0.19px;-webkit-text-stroke:.3px #000">Benzin</div>
<div class="t b" style="left:543.8px;top:324.7px;font-size:11px;letter-spacing:0.31px;-webkit-text-stroke:.3px #000">Mahlzeiten</div>
<div class="t b" style="left:616.5px;top:324.7px;font-size:11px;letter-spacing:0.55px;-webkit-text-stroke:.3px #000">Telefon</div>
<div class="t b" style="left:680.5px;top:324.7px;font-size:11px;letter-spacing:0.49px;-webkit-text-stroke:.3px #000">Spesen</div>
<div class="t b" style="left:737.4px;top:324.7px;font-size:11px;letter-spacing:0.39px;-webkit-text-stroke:.3px #000">Sonstiges</div>
<div class="t b" style="left:814.0px;top:324.7px;font-size:11px;letter-spacing:0.45px;-webkit-text-stroke:.3px #000">Gesamt</div>
<div class="rt" style="left:103px;top:323px"></div>
<div class="rt" style="left:167px;top:323px"></div>
<div class="rt" style="left:320px;top:323px"></div>
<div class="rt" style="left:396px;top:323px"></div>
<div class="t" style="left:33.5px;top:338.7px;font-size:11px;letter-spacing:0.06px">25.01.95</div>
<div class="t" style="left:111.4px;top:338.7px;font-size:11px;letter-spacing:0.43px">111</div>
<div class="t" style="left:174.2px;top:338.7px;font-size:11px;letter-spacing:-0.04px">Besuch der Niederlassung</div>
<div class="t" style="left:347.5px;top:338.7px;font-size:11px;letter-spacing:-0.45px">280,00 DM</div>
<div class="t" style="left:347.5px;top:576.7px;font-size:11px;letter-spacing:-0.45px">280,00 DM</div>
<div class="t" style="left:429.5px;top:338.7px;font-size:11px;letter-spacing:-0.39px">45,00 DM</div>
<div class="t" style="left:429.5px;top:576.7px;font-size:11px;letter-spacing:-0.39px">45,00 DM</div>
<div class="t" style="left:500.1px;top:338.7px;font-size:11px;letter-spacing:-0.56px">6,80 DM</div>
<div class="t" style="left:500.1px;top:576.7px;font-size:11px;letter-spacing:-0.56px">6,80 DM</div>
<div class="t" style="left:557.5px;top:338.7px;font-size:11px;letter-spacing:-0.36px">15,30 DM</div>
<div class="t" style="left:557.5px;top:576.7px;font-size:11px;letter-spacing:-0.36px">15,30 DM</div>
<div class="t" style="left:819.8px;top:338.7px;font-size:11px;letter-spacing:-0.41px">347,10 DM</div>
<div class="t" style="left:819.8px;top:590.7px;font-size:11px;letter-spacing:-0.41px">347,10 DM</div>
<div class="t" style="left:819.8px;top:618.7px;font-size:11px;letter-spacing:-0.41px">347,10 DM</div>
<div class="t" style="left:705.8px;top:590.7px;font-size:11px;letter-spacing:0.02px">Zwischensumme</div>
<div class="t" style="left:702.5px;top:604.7px;font-size:11px;letter-spacing:0.07px">Vorauszahlungen</div>
<div class="t b" style="left:709.5px;top:618.7px;font-size:11px;letter-spacing:0.46px;-webkit-text-stroke:.3px #000">Gesamtbetrag</div>
<div class="grp" style="left:23px;top:602px;width:141px;height:77px;border-radius:13px"></div>
<div class="a" style="left:38px;top:600px;width:88px;height:5px;background:#fff"></div>
<div class="t b" style="left:42.5px;top:597.7px;font-size:11px;letter-spacing:0.45px;-webkit-text-stroke:.3px #000">Genehmigung</div>
<div class="grp" style="left:173px;top:602px;width:326px;height:77px;border-radius:13px"></div>
<div class="a" style="left:187px;top:600px;width:79px;height:5px;background:#fff"></div>
<div class="t b" style="left:192.5px;top:597.7px;font-size:11px;letter-spacing:0.61px;-webkit-text-stroke:.3px #000">Anmerkung</div>
<div class="grp" style="left:505px;top:602px;width:143px;height:76px;border-radius:13px"></div>
<div class="a" style="left:518px;top:619px;width:11px;height:11px;border-radius:50%;border:1.5px solid;border-color:#000 #c8c8c8 #c8c8c8 #000"></div>
<div class="a" style="left:521px;top:622px;width:5px;height:5px;border-radius:1px;background:#000"></div>
<div class="a" style="left:519px;top:645px;width:11px;height:11px;border-radius:50%;border:1.5px solid;border-color:#000 #c8c8c8 #c8c8c8 #000"></div>
<div class="t" style="left:543.0px;top:618.7px;font-size:11px;letter-spacing:-0.04px">Erstattung</div>
<div class="t" style="left:543.0px;top:646.7px;font-size:11px;letter-spacing:-0.11px">Rückzahlung</div>
<div class="a" style="left:32px;top:690px;width:842px;height:3px;background:#3366ff"></div>
<div class="a" style="left:32px;top:694px;width:842px;height:1px;background:#1a1a9a"></div>
<div class="a" style="left:33px;top:709px;width:444px;height:30px;background:#e6e6e6"></div>
<div class="dot-h" style="left:32px;top:708px;width:446px"></div>
<div class="dot-v" style="left:32px;top:708px;height:14px"></div>
<div class="dot-v" style="left:477px;top:708px;height:18px"></div>
<div class="t i" style="left:581.2px;top:716.7px;font-size:11px;letter-spacing:0.02px">Geben Sie hier Ihre Anmerkungen ein.</div>
</div>
<!-- SECTION: bottom -->
<div id="bottom">
<svg class="a" style="left:0;top:0" width="1024" height="768" viewBox="0 0 1024 768" shape-rendering="crispEdges">
<rect x="0" y="733" width="1008" height="17" fill="#c6c6c6"/>
<rect x="0" y="733" width="773" height="1" fill="#848484"/>
<rect x="0" y="749" width="1008" height="1" fill="#000"/>
<rect x="0" y="734" width="16" height="15" fill="#c6c6c6"/>
<rect x="0" y="734" width="1" height="15" fill="#fff"/>
<rect x="0" y="734" width="16" height="1" fill="#fff"/>
<rect x="15" y="734" width="1" height="15" fill="#848484"/>
<rect x="16" y="734" width="16" height="15" fill="#c6c6c6"/>
<rect x="16" y="734" width="1" height="15" fill="#fff"/>
<rect x="16" y="734" width="16" height="1" fill="#fff"/>
<rect x="31" y="734" width="1" height="15" fill="#848484"/>
<rect x="32" y="734" width="16" height="15" fill="#c6c6c6"/>
<rect x="32" y="734" width="1" height="15" fill="#fff"/>
<rect x="32" y="734" width="16" height="1" fill="#fff"/>
<rect x="47" y="734" width="1" height="15" fill="#848484"/>
<rect x="48" y="734" width="16" height="15" fill="#c6c6c6"/>
<rect x="48" y="734" width="1" height="15" fill="#fff"/>
<rect x="48" y="734" width="16" height="1" fill="#fff"/>
<rect x="63" y="734" width="1" height="15" fill="#848484"/>
<rect x="3" y="737" width="2" height="10" fill="#000"/>
<polygon points="6,741.5 11,736.5 11,746.5" fill="#000" shape-rendering="auto"/>
<polygon points="21,741.5 26,736.5 26,746.5" fill="#000" shape-rendering="auto"/>
<polygon points="43,741.5 38,736.5 38,746.5" fill="#000" shape-rendering="auto"/>
<polygon points="58,741.5 53,736.5 53,746.5" fill="#000" shape-rendering="auto"/>
<rect x="59" y="737" width="2" height="10" fill="#000"/>
<polyline points="64.5,734 71.5,749" fill="none" stroke="#000" stroke-width="1" shape-rendering="auto"/>
<polygon points="237.5,733 244.5,749 398.5,749 403.5,734 403.5,733" fill="#fff"/>
<polyline points="237.5,734 244.5,749" fill="none" stroke="#000" stroke-width="1" shape-rendering="auto"/>
<polyline points="403.5,734 398.5,749" fill="none" stroke="#000" stroke-width="1" shape-rendering="auto"/>
<rect x="244" y="748" width="155" height="1" fill="#fff"/>
<rect x="244" y="749" width="155" height="1" fill="#000"/>
<rect x="773" y="733" width="1" height="16" fill="#000"/>
<rect x="774" y="734" width="4" height="15" fill="#c6c6c6"/>
<rect x="774" y="734" width="1" height="15" fill="#fff"/>
<rect x="778" y="733" width="1" height="16" fill="#000"/>
<rect x="779" y="733" width="229" height="1" fill="#000"/>
<rect x="779" y="734" width="15" height="15" fill="#c6c6c6"/>
<rect x="779" y="734" width="15" height="1" fill="#fff"/>
<rect x="779" y="734" width="1" height="15" fill="#fff"/>
<rect x="779" y="748" width="15" height="1" fill="#848484"/>
<rect x="793" y="734" width="1" height="15" fill="#848484"/>
<rect x="795" y="734" width="16" height="15" fill="#c6c6c6"/>
<rect x="795" y="734" width="16" height="1" fill="#fff"/>
<rect x="795" y="734" width="1" height="15" fill="#fff"/>
<rect x="795" y="748" width="16" height="1" fill="#848484"/>
<rect x="810" y="734" width="1" height="15" fill="#848484"/>
<rect x="987" y="734" width="16" height="15" fill="#c6c6c6"/>
<rect x="987" y="734" width="16" height="1" fill="#fff"/>
<rect x="987" y="734" width="1" height="15" fill="#fff"/>
<rect x="987" y="748" width="16" height="1" fill="#848484"/>
<rect x="1002" y="734" width="1" height="15" fill="#848484"/>
<rect x="794" y="734" width="1" height="15" fill="#000"/>
<rect x="811" y="734" width="176" height="15" fill="#c6c6c6"/>
<rect x="1003" y="733" width="5" height="17" fill="#000"/>
<polygon points="783,741.5 787,737.5 787,740 791,740 791,743 787,743 787,745.5" fill="#000" shape-rendering="auto"/>
<polygon points="999,741.5 995,737.5 995,740 991,740 991,743 995,743 995,745.5" fill="#000" shape-rendering="auto"/>
<rect x="1008" y="112" width="16" height="638" fill="#c6c6c6"/>
<rect x="1008" y="112" width="1" height="638" fill="#848484"/>
<rect x="1009" y="112" width="15" height="7" fill="#000"/>
<rect x="1009" y="119" width="15" height="15" fill="#c6c6c6"/>
<rect x="1009" y="119" width="15" height="1" fill="#fff"/>
<rect x="1009" y="119" width="1" height="15" fill="#fff"/>
<rect x="1009" y="133" width="15" height="1" fill="#848484"/>
<rect x="1023" y="119" width="1" height="15" fill="#848484"/>
<rect x="1009" y="135" width="15" height="15" fill="#c6c6c6"/>
<rect x="1009" y="135" width="15" height="1" fill="#fff"/>
<rect x="1009" y="135" width="1" height="15" fill="#fff"/>
<rect x="1009" y="149" width="15" height="1" fill="#848484"/>
<rect x="1023" y="135" width="1" height="15" fill="#848484"/>
<rect x="1009" y="718" width="15" height="15" fill="#c6c6c6"/>
<rect x="1009" y="718" width="15" height="1" fill="#fff"/>
<rect x="1009" y="718" width="1" height="15" fill="#fff"/>
<rect x="1009" y="732" width="15" height="1" fill="#848484"/>
<rect x="1023" y="718" width="1" height="15" fill="#848484"/>
<rect x="1009" y="134" width="15" height="1" fill="#000"/>
<rect x="1009" y="150" width="15" height="1" fill="#848484"/>
<polygon points="1016.5,122 1020.5,126 1018,126 1018,130 1015,130 1015,126 1012.5,126" fill="#000" shape-rendering="auto"/>
<polygon points="1016.5,730 1020.5,726 1018,726 1018,722 1015,722 1015,726 1012.5,726" fill="#000" shape-rendering="auto"/>
<rect x="1008" y="733" width="16" height="17" fill="#c6c6c6"/>
<rect x="0" y="750" width="1024" height="18" fill="#c6c6c6"/>
<rect x="0" y="750" width="1024" height="1" fill="#fff"/>
<rect x="653" y="752" width="1" height="16" fill="#848484"/>
<rect x="654" y="752" width="1" height="16" fill="#fff"/>
<rect x="661" y="752" width="34" height="1" fill="#848484"/>
<rect x="661" y="752" width="1" height="14" fill="#848484"/>
<rect x="661" y="765" width="34" height="1" fill="#fff"/>
<rect x="694" y="752" width="1" height="14" fill="#fff"/>
<rect x="697" y="752" width="130" height="1" fill="#848484"/>
<rect x="697" y="752" width="1" height="14" fill="#848484"/>
<rect x="697" y="765" width="130" height="1" fill="#fff"/>
<rect x="826" y="752" width="1" height="14" fill="#fff"/>
<rect x="829" y="752" width="31" height="1" fill="#848484"/>
<rect x="829" y="752" width="1" height="14" fill="#848484"/>
<rect x="829" y="765" width="31" height="1" fill="#fff"/>
<rect x="859" y="752" width="1" height="14" fill="#fff"/>
<rect x="862" y="752" width="45" height="1" fill="#848484"/>
<rect x="862" y="752" width="1" height="14" fill="#848484"/>
<rect x="862" y="765" width="45" height="1" fill="#fff"/>
<rect x="906" y="752" width="1" height="14" fill="#fff"/>
<rect x="909" y="752" width="19" height="1" fill="#848484"/>
<rect x="909" y="752" width="1" height="14" fill="#848484"/>
<rect x="909" y="765" width="19" height="1" fill="#fff"/>
<rect x="927" y="752" width="1" height="14" fill="#fff"/>
<rect x="930" y="752" width="33" height="1" fill="#848484"/>
<rect x="930" y="752" width="1" height="14" fill="#848484"/>
<rect x="930" y="765" width="33" height="1" fill="#fff"/>
<rect x="962" y="752" width="1" height="14" fill="#fff"/>
<rect x="966" y="752" width="27" height="1" fill="#848484"/>
<rect x="966" y="752" width="1" height="14" fill="#848484"/>
<rect x="966" y="765" width="27" height="1" fill="#fff"/>
<rect x="992" y="752" width="1" height="14" fill="#fff"/>
<rect x="995" y="752" width="24" height="1" fill="#848484"/>
<rect x="995" y="752" width="1" height="14" fill="#848484"/>
<rect x="995" y="765" width="24" height="1" fill="#fff"/>
<rect x="1018" y="752" width="1" height="14" fill="#fff"/>
</svg>
<div class="t" style="left:7.2px;top:753.8px;font-size:12px;letter-spacing:0.58px">Bereit</div>
<div class="t" style="left:81.5px;top:735.8px;font-size:12px;letter-spacing:0.16px">Anpassen der Abrechnung</div>
<div class="t b" style="left:247.0px;top:735.8px;font-size:12px;letter-spacing:0.43px">Reisekostenabrechnung</div>
<div class="t" style="left:911.0px;top:753.8px;font-size:11.5px;letter-spacing:-0.34px">NF</div>
</div>
<!-- SECTION: overlays -->
<div id="over">
<svg class="a" style="left:0;top:0" width="1024" height="768" viewBox="0 0 1024 768" shape-rendering="crispEdges">
<rect x="812" y="0" width="163" height="18" fill="#c6c6c6"/>
<rect x="812" y="18" width="212" height="1" fill="#fff"/>
<rect x="813" y="1" width="10" height="10" fill="#848484"/>
<rect x="814" y="2" width="8" height="8" fill="#fff"/>
<rect x="815" y="3" width="6" height="6" fill="#c6c6c6"/>
<rect x="815" y="5" width="6" height="1" fill="#fff"/>
<rect x="815" y="6" width="6" height="1" fill="#848484"/>
<rect x="825" y="0" width="1" height="18" fill="#000"/>
<rect x="826" y="0" width="2" height="18" fill="#fff"/>
<rect x="828" y="0" width="2" height="18" fill="#000"/>
<rect x="852" y="0" width="1" height="18" fill="#848484"/>
<rect x="853" y="0" width="1" height="18" fill="#fff"/>
<rect x="906" y="0" width="1" height="18" fill="#848484"/>
<rect x="907" y="0" width="1" height="18" fill="#fff"/>
<rect x="929" y="0" width="1" height="18" fill="#848484"/>
<rect x="930" y="0" width="1" height="18" fill="#fff"/>
<rect x="952" y="0" width="1" height="18" fill="#848484"/>
<rect x="953" y="0" width="1" height="18" fill="#fff"/>
<rect x="875" y="0" width="9" height="18" fill="#000"/>
<rect x="836" y="1" width="12" height="15" fill="#fff"/>
<rect x="836" y="1" width="12" height="2" fill="#e8d800"/>
<rect x="836" y="1" width="1" height="15" fill="#848484"/>
<rect x="847" y="1" width="1" height="15" fill="#848484"/>
<rect x="836" y="15" width="12" height="1" fill="#000"/>
<rect x="838" y="5" width="8" height="1" fill="#b0b0b0"/>
<rect x="838" y="7" width="8" height="1" fill="#b0b0b0"/>
<rect x="838" y="9" width="8" height="1" fill="#b0b0b0"/>
<rect x="838" y="11" width="8" height="1" fill="#b0b0b0"/>
<rect x="837" y="13" width="1" height="2" fill="#848484"/>
<rect x="839" y="13" width="1" height="2" fill="#848484"/>
<rect x="841" y="13" width="1" height="2" fill="#848484"/>
<rect x="843" y="13" width="1" height="2" fill="#848484"/>
<rect x="845" y="13" width="1" height="2" fill="#848484"/>
<polygon points="857.5,15.5 857.5,7.5 858.5,6.5 862.5,6.5 863.5,7.5 868.5,7.5 868.5,10" fill="#ffff80" stroke="#000" stroke-width="1"/>
<polygon points="857.5,15.5 861.5,9.5 872.5,9.5 868.5,15.5" fill="#e8e060" stroke="#000" stroke-width="1"/>
<path d="M865.5,4.5 Q868,1.5 871,4.5" fill="none" stroke="#000" stroke-width="1" shape-rendering="auto"/>
<polygon points="872,2.5 872,6.5 868.5,6.5" fill="#000"/>
<text x="886.5" y="15" font-family='"Liberation Serif",serif' font-size="16" font-weight="bold" font-style="italic" fill="#00f0f0" stroke="#002020" stroke-width="1.2" paint-order="stroke" shape-rendering="auto">W</text>
<polygon points="910,4 915,4 926,15 921,15" fill="#00c8c8" stroke="#003030" stroke-width="0.7" shape-rendering="auto"/>
<polygon points="921,4 926,4 915,15 910,15" fill="#60ffff" stroke="#003030" stroke-width="0.7" shape-rendering="auto"/>
<rect x="933" y="3" width="16" height="12" fill="#848484"/>
<rect x="934" y="3" width="14" height="11" fill="#fff"/>
<rect x="936" y="5" width="10" height="7" fill="#00d0d0"/>
<rect x="939" y="7" width="4" height="3" fill="#e00000"/>
<rect x="942" y="6" width="2" height="2" fill="#e00000"/>
<rect x="959" y="7" width="13" height="8" fill="#fff"/>
<rect x="959" y="7" width="13" height="1" fill="#848484"/>
<rect x="959" y="7" width="1" height="8" fill="#848484"/>
<rect x="959" y="14" width="13" height="1" fill="#000"/>
<rect x="971" y="7" width="1" height="8" fill="#000"/>
<rect x="962" y="10" width="6" height="1" fill="#0000a0"/>
<rect x="962" y="12" width="6" height="1" fill="#0000a0"/>
<rect x="969" y="8" width="2" height="2" fill="#c00000"/>
<circle cx="960.5" cy="6" r="3.5" fill="#fff" stroke="#404040" stroke-width="0.8" shape-rendering="auto"/>
<polyline points="960.5,6 959,4" fill="none" stroke="#000" stroke-width="0.8" shape-rendering="auto"/>
<polyline points="960.5,6 962.5,5" fill="none" stroke="#c0c000" stroke-width="0.8" shape-rendering="auto"/>
<rect x="975" y="0" width="12" height="18" fill="#000080"/>
<rect x="987" y="0" width="17" height="18" fill="#c6c6c6"/>
<rect x="987" y="0" width="17" height="1" fill="#fff"/>
<rect x="987" y="0" width="1" height="18" fill="#fff"/>
<rect x="987" y="17" width="17" height="1" fill="#848484"/>
<rect x="1003" y="0" width="1" height="18" fill="#848484"/>
<rect x="1006" y="0" width="18" height="18" fill="#c6c6c6"/>
<rect x="1006" y="0" width="18" height="1" fill="#fff"/>
<rect x="1006" y="0" width="1" height="18" fill="#fff"/>
<rect x="1006" y="17" width="18" height="1" fill="#848484"/>
<rect x="1023" y="0" width="1" height="18" fill="#848484"/>
<rect x="1004" y="0" width="2" height="18" fill="#000080"/>
<polygon points="991.5,7.5 999.5,7.5 995.5,11.5" fill="#000"/>
<polygon points="1011,7.5 1019,7.5 1015,3.5" fill="#000"/>
<polygon points="1011,10.5 1019,10.5 1015,14.5" fill="#000"/>
<rect x="972" y="22" width="16" height="14" fill="#c6c6c6"/>
<rect x="972" y="22" width="16" height="1" fill="#fff"/>
<rect x="972" y="22" width="1" height="14" fill="#fff"/>
<rect x="972" y="35" width="16" height="1" fill="#000"/>
<rect x="987" y="22" width="1" height="14" fill="#000"/>
<rect x="973" y="34" width="14" height="1" fill="#848484"/>
<rect x="986" y="23" width="1" height="12" fill="#848484"/>
<rect x="988" y="22" width="16" height="14" fill="#c6c6c6"/>
<rect x="988" y="22" width="16" height="1" fill="#fff"/>
<rect x="988" y="22" width="1" height="14" fill="#fff"/>
<rect x="988" y="35" width="16" height="1" fill="#000"/>
<rect x="1003" y="22" width="1" height="14" fill="#000"/>
<rect x="989" y="34" width="14" height="1" fill="#848484"/>
<rect x="1002" y="23" width="1" height="12" fill="#848484"/>
<rect x="1006" y="22" width="16" height="14" fill="#c6c6c6"/>
<rect x="1006" y="22" width="16" height="1" fill="#fff"/>
<rect x="1006" y="22" width="1" height="14" fill="#fff"/>
<rect x="1006" y="35" width="16" height="1" fill="#000"/>
<rect x="1021" y="22" width="1" height="14" fill="#000"/>
<rect x="1007" y="34" width="14" height="1" fill="#848484"/>
<rect x="1020" y="23" width="1" height="12" fill="#848484"/>
<rect x="976" y="31" width="6" height="2" fill="#000"/>
<rect x="994" y="25" width="6" height="6" fill="#000"/>
<rect x="995" y="27" width="4" height="3" fill="#c6c6c6"/>
<rect x="992" y="28" width="6" height="6" fill="#000"/>
<rect x="993" y="30" width="4" height="3" fill="#c6c6c6"/>
<polyline points="1010.5,25.5 1017.5,32.5" fill="none" stroke="#000" stroke-width="1.5" shape-rendering="auto"/>
<polyline points="1017.5,25.5 1010.5,32.5" fill="none" stroke="#000" stroke-width="1.5" shape-rendering="auto"/>
<rect x="593" y="136" width="108" height="73" fill="#000"/>
<rect x="593" y="136" width="107" height="72" fill="#fff"/>
<rect x="594" y="137" width="106" height="71" fill="#848484"/>
<rect x="594" y="137" width="105" height="70" fill="#dfdfdf"/>
<rect x="595" y="138" width="104" height="69" fill="#c6c6c6"/>
<rect x="597" y="140" width="100" height="18" fill="#000080"/>
<rect x="680" y="141" width="16" height="15" fill="#c6c6c6"/>
<rect x="680" y="141" width="16" height="1" fill="#fff"/>
<rect x="680" y="141" width="1" height="15" fill="#fff"/>
<rect x="680" y="155" width="16" height="1" fill="#000"/>
<rect x="695" y="141" width="1" height="15" fill="#000"/>
<rect x="681" y="154" width="14" height="1" fill="#848484"/>
<rect x="694" y="142" width="1" height="13" fill="#848484"/>
<polyline points="684.5,145 691.0,151.5" fill="none" stroke="#000" stroke-width="1.5" shape-rendering="auto"/>
<polyline points="691.0,145 684.5,151.5" fill="none" stroke="#000" stroke-width="1.5" shape-rendering="auto"/>
<rect x="604.5" y="165.5" width="14" height="12" rx="2" fill="#408080" stroke="#000" shape-rendering="auto"/>
<rect x="608" y="167" width="7" height="9" fill="#000"/>
<rect x="609" y="168" width="5" height="7" fill="#fff"/>
<rect x="610" y="169" width="3" height="1" fill="#0000a0"/>
<rect x="610" y="171" width="2" height="1" fill="#0000a0"/>
<rect x="610" y="173" width="3" height="1" fill="#0000a0"/>
<rect x="630" y="165" width="14" height="13" fill="#000"/>
<rect x="631" y="166" width="12" height="11" fill="#fff"/>
<rect x="634" y="166" width="1" height="11" fill="#a0a0a0"/>
<rect x="638" y="166" width="1" height="11" fill="#a0a0a0"/>
<rect x="631" y="169" width="12" height="1" fill="#a0a0a0"/>
<rect x="631" y="172" width="12" height="1" fill="#a0a0a0"/>
<rect x="631" y="175" width="12" height="1" fill="#a0a0a0"/>
<rect x="627" y="168" width="4" height="6" fill="#000"/>
<rect x="628" y="169" width="3" height="4" fill="#e8e000"/>
<rect x="651" y="169" width="15" height="9" fill="#000"/>
<rect x="652" y="170" width="12" height="6" fill="#ffff40"/>
<rect x="665" y="170" width="1" height="9" fill="#000"/>
<circle cx="663" cy="175" r="1.6" fill="#fff" stroke="#000" stroke-width="0.8" shape-rendering="auto"/>
<polyline points="650,164 656,170" fill="none" stroke="#e8e000" stroke-width="1" shape-rendering="auto"/>
<polyline points="656,164 653,171" fill="none" stroke="#e8e000" stroke-width="1" shape-rendering="auto"/>
<polyline points="650,168 657,168" fill="none" stroke="#e8e000" stroke-width="1" shape-rendering="auto"/>
<polyline points="653,163 653,172" fill="none" stroke="#e8e000" stroke-width="1" shape-rendering="auto"/>
<text x="675" y="177.5" font-family='"Liberation Sans",sans-serif' font-size="17" font-weight="bold" font-style="normal" fill="#f8f000" stroke="#000" stroke-width="1.6" paint-order="stroke" shape-rendering="auto">?</text>
<rect x="601" y="183" width="23" height="22" fill="#fff"/>
<rect x="601" y="183" width="22" height="21" fill="#848484"/>
<rect x="602" y="184" width="22" height="21" fill="#fff"/>
<rect x="602" y="184" width="21" height="20" fill="#e3e3e3"/>
<rect x="607" y="188" width="11" height="13" fill="#000"/>
<rect x="608" y="189" width="9" height="11" fill="#fff"/>
<rect x="610" y="191" width="1" height="1" fill="#848484"/>
<rect x="610" y="193" width="1" height="1" fill="#848484"/>
<rect x="610" y="195" width="1" height="1" fill="#848484"/>
<rect x="610" y="197" width="1" height="1" fill="#848484"/>
<polyline points="613,193.5 620,193.5" fill="none" stroke="#e00000" stroke-width="1.5"/>
<polygon points="612,193.5 615.5,190.5 615.5,196.5" fill="#e00000"/>
<rect x="628" y="187" width="15" height="15" fill="#000"/>
<rect x="629" y="188" width="13" height="13" fill="#fff"/>
<text x="629.5" y="195.5" font-family='"Liberation Sans",sans-serif' font-size="8.5" font-weight="bold" font-style="normal" fill="#e00000" textLength="12" lengthAdjust="spacingAndGlyphs">001</text>
<rect x="650" y="187" width="16" height="15" fill="#000"/>
<rect x="651" y="188" width="14" height="13" fill="#fff"/>
<rect x="655" y="188" width="1" height="13" fill="#b0b0b0"/>
<rect x="660" y="188" width="1" height="13" fill="#b0b0b0"/>
<rect x="651" y="192" width="14" height="1" fill="#b0b0b0"/>
<rect x="651" y="196" width="14" height="1" fill="#b0b0b0"/>
<polygon points="653,199 654,196 662,189 664,191 656,198" fill="#e8e000" stroke="#000" stroke-width="0.7" shape-rendering="auto"/>
<polygon points="662,189 663,188 665,190 664,191" fill="#e060a0" shape-rendering="auto"/>
<rect x="875" y="613" width="132" height="119" fill="#000"/>
<rect x="876" y="614" width="130" height="117" fill="#c6c6c6"/>
<rect x="878" y="616" width="126" height="113" fill="#000"/>
<rect x="879" y="617" width="124" height="111" fill="#c6c6c6"/>
<rect x="897" y="614" width="1" height="2" fill="#000"/>
<rect x="984" y="614" width="1" height="2" fill="#000"/>
<rect x="897" y="729" width="1" height="2" fill="#000"/>
<rect x="984" y="729" width="1" height="2" fill="#000"/>
<rect x="876" y="635" width="2" height="1" fill="#000"/>
<rect x="876" y="709" width="2" height="1" fill="#000"/>
<rect x="1004" y="635" width="2" height="1" fill="#000"/>
<rect x="1004" y="709" width="2" height="1" fill="#000"/>
<rect x="879" y="617" width="124" height="18" fill="#000080"/>
<rect x="986" y="618" width="16" height="15" fill="#c6c6c6"/>
<rect x="986" y="618" width="16" height="1" fill="#fff"/>
<rect x="986" y="618" width="1" height="15" fill="#fff"/>
<rect x="986" y="632" width="16" height="1" fill="#000"/>
<rect x="1001" y="618" width="1" height="15" fill="#000"/>
<rect x="987" y="631" width="14" height="1" fill="#848484"/>
<rect x="1000" y="619" width="1" height="13" fill="#848484"/>
<polyline points="990.5,622 997.0,628.5" fill="none" stroke="#000" stroke-width="1.5" shape-rendering="auto"/>
<polyline points="997.0,622 990.5,628.5" fill="none" stroke="#000" stroke-width="1.5" shape-rendering="auto"/>
<defs><linearGradient id="ag" x1="0" y1="0" x2="0.75" y2="1"><stop offset="0" stop-color="#70768c"/><stop offset="0.35" stop-color="#a9abb3"/><stop offset="0.7" stop-color="#d6d6d8"/><stop offset="1" stop-color="#e8e8ea"/></linearGradient><radialGradient id="ag2" cx="0.15" cy="1" r="0.6"><stop offset="0" stop-color="#8a8e9c"/><stop offset="1" stop-color="#8a8e9c" stop-opacity="0"/></radialGradient></defs>
<rect x="879" y="636" width="124" height="92" fill="url(#ag)"/>
<rect x="879" y="635" width="124" height="1" fill="#d8d8d8"/>
<g shape-rendering="auto">
<ellipse cx="941" cy="723.5" rx="17" ry="2" fill="#b0b0b4"/>
<path d="M928,698 L954,698 L954,722 L946,722 L943,709 L939,709 L936,722 L928,722 Z" fill="#2f6fa8"/>
<path d="M928,700 L934,700 L932,722 L928,722 Z" fill="#205080"/>
<ellipse cx="930" cy="723" rx="5" ry="1.8" fill="#f0d8d0"/><ellipse cx="950" cy="723" rx="5" ry="1.8" fill="#f0d8d0"/>
<path d="M926,679 Q941,673 956,679 Q965,686 964,696 Q961,704 955,703 L953,707 L944,706 L941,699 L937,706 L929,707 Q920,702 919,692 Q920,684 926,679 Z" fill="#4a4446"/>
<ellipse cx="932" cy="694" rx="7" ry="11" fill="#6a6064"/>
<circle cx="940.5" cy="690" r="2" fill="#d8b0b0"/>
<path d="M919,668 L917,662 L921,660 L919,655 L925,655 L924,650 L930,652 L932,646 L938,650 L943,644 L946,650 L953,646 L954,652 L960,651 L958,657 L963,660 L959,664 L963,669 L959,672 L961,677 L955,676 Q950,672 941,672 Q930,672 926,677 L922,676 L923,671 Z" fill="#f0c4c4"/>
<path d="M921,661 Q927,652 934,654 M931,648 Q937,650 938,655 M946,652 Q953,650 956,657 M921,669 Q924,663 929,662 M953,663 Q959,665 958,673 M944,647 Q948,650 947,655" stroke="#ffffff" stroke-width="2" fill="none"/>
<ellipse cx="940.5" cy="665" rx="10" ry="11" fill="#c8605c"/>
<ellipse cx="940.5" cy="672" rx="9" ry="5" fill="#f0c0bc"/>
<ellipse cx="940.5" cy="667" rx="2.5" ry="4.5" fill="#b04844"/>
<circle cx="936" cy="662" r="2.2" fill="#fff"/><circle cx="945" cy="662" r="2.2" fill="#fff"/><circle cx="936.3" cy="662.3" r="1.1" fill="#000"/><circle cx="944.7" cy="662.3" r="1.1" fill="#000"/>
<path d="M932,658 Q936,655 939,658 M942,658 Q945,655 949,658" stroke="#5a2020" stroke-width="1.3" fill="none"/>
<circle cx="987" cy="650" r="8.5" fill="#ffff00" stroke="#b0a800" stroke-width="0.8"/>
<path d="M981,656 L993,656 L990.5,661 L983.5,661 Z" fill="#e8e020"/>
<rect x="983.5" y="660" width="7" height="6.5" rx="1" fill="#f4f4f4" stroke="#808080" stroke-width="0.8"/>
<path d="M983.5,662.5 H990.5 M983.5,664.5 H990.5" stroke="#909090" stroke-width="0.7"/>
</g>
</svg>
<div class="t" style="left:598.0px;top:142.8px;font-size:12px;letter-spacing:-0.61px;color:#fff">Reisekosten</div>
</div>
</div>
</body></html>
